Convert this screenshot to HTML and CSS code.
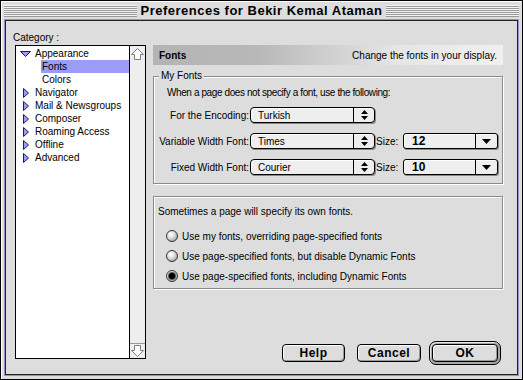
FILE: index.html
```html
<!DOCTYPE html>
<html lang="en">
<head>
    <meta charset="UTF-8">
    <title>Preferences for Bekir Kemal Ataman</title>
    <link rel="stylesheet" href="styles.css">
</head>
<body>
<div class="window">
    <div class="titlebar">
        <div class="stripes"></div>
        <div class="title">Preferences for Bekir Kemal Ataman</div>
        <div class="stripes"></div>
    </div>
    <div class="frame">
        <div class="content">
            <div class="category-label">Category :</div>

            <div class="list">
                <ul class="tree">
                    <li class="node"><span class="toggle"><svg width="11" height="6" viewBox="0 0 11 6"><polygon points="0.5,0.5 10.5,0.5 5.5,5.5" fill="#9c9cf8" stroke="#1c1c5c"/></svg></span>Appearance</li>
                    <li class="leaf selected"><span>Fonts</span></li>
                    <li class="leaf"><span>Colors</span></li>
                    <li class="node"><span class="toggle"><svg width="6" height="10" viewBox="0 0 6 10"><polygon points="0.5,0.5 5.5,5 0.5,9.5" fill="#9c9cf8" stroke="#1c1c5c"/></svg></span>Navigator</li>
                    <li class="node"><span class="toggle"><svg width="6" height="10" viewBox="0 0 6 10"><polygon points="0.5,0.5 5.5,5 0.5,9.5" fill="#9c9cf8" stroke="#1c1c5c"/></svg></span>Mail &amp; Newsgroups</li>
                    <li class="node"><span class="toggle"><svg width="6" height="10" viewBox="0 0 6 10"><polygon points="0.5,0.5 5.5,5 0.5,9.5" fill="#9c9cf8" stroke="#1c1c5c"/></svg></span>Composer</li>
                    <li class="node"><span class="toggle"><svg width="6" height="10" viewBox="0 0 6 10"><polygon points="0.5,0.5 5.5,5 0.5,9.5" fill="#9c9cf8" stroke="#1c1c5c"/></svg></span>Roaming Access</li>
                    <li class="node"><span class="toggle"><svg width="6" height="10" viewBox="0 0 6 10"><polygon points="0.5,0.5 5.5,5 0.5,9.5" fill="#9c9cf8" stroke="#1c1c5c"/></svg></span>Offline</li>
                    <li class="node"><span class="toggle"><svg width="6" height="10" viewBox="0 0 6 10"><polygon points="0.5,0.5 5.5,5 0.5,9.5" fill="#9c9cf8" stroke="#1c1c5c"/></svg></span>Advanced</li>
                </ul>
                <div class="scrollbar">
                    <div class="sb-arrow"><svg width="13" height="12" viewBox="0 0 13 12"><path d="M6.5 0.5 L12.5 6.5 L9.5 6.5 L9.5 11.5 L3.5 11.5 L3.5 6.5 L0.5 6.5 Z" fill="#fff" stroke="#808080"/></svg></div>
                    <div class="sb-arrow down"><svg width="13" height="12" viewBox="0 0 13 12"><path d="M3.5 0.5 L9.5 0.5 L9.5 5.5 L12.5 5.5 L6.5 11.5 L0.5 5.5 L3.5 5.5 Z" fill="#fff" stroke="#808080"/></svg></div>
                </div>
            </div>

            <div class="panel">
                <div class="panel-header">
                    <span class="panel-title">Fonts</span>
                    <span>Change the fonts in your display.</span>
                </div>

                <fieldset class="group">
                    <legend>My Fonts</legend>
                    <p class="intro">When a page does not specify a font, use the following:</p>
                    <div class="font-grid">
                        <div class="field-label">For the Encoding:</div>
                        <div class="popup">
                            <span class="popup-text">Turkish</span>
                            <span class="popup-arrows"><svg width="7" height="10" viewBox="0 0 7 10"><polygon points="3.5,0 7,4 0,4"/><polygon points="0,6 7,6 3.5,10"/></svg></span>
                        </div>

                        <div class="field-label">Variable Width Font:</div>
                        <div class="popup">
                            <span class="popup-text">Times</span>
                            <span class="popup-arrows"><svg width="7" height="10" viewBox="0 0 7 10"><polygon points="3.5,0 7,4 0,4"/><polygon points="0,6 7,6 3.5,10"/></svg></span>
                        </div>
                        <div class="size-label">Size:</div>
                        <div class="combo">
                            <span class="combo-text">12</span>
                            <span class="combo-arrow"><svg width="9" height="5" viewBox="0 0 9 5"><polygon points="0,0 9,0 4.5,5"/></svg></span>
                        </div>

                        <div class="field-label">Fixed Width Font:</div>
                        <div class="popup">
                            <span class="popup-text">Courier</span>
                            <span class="popup-arrows"><svg width="7" height="10" viewBox="0 0 7 10"><polygon points="3.5,0 7,4 0,4"/><polygon points="0,6 7,6 3.5,10"/></svg></span>
                        </div>
                        <div class="size-label">Size:</div>
                        <div class="combo">
                            <span class="combo-text">10</span>
                            <span class="combo-arrow"><svg width="9" height="5" viewBox="0 0 9 5"><polygon points="0,0 9,0 4.5,5"/></svg></span>
                        </div>
                    </div>
                </fieldset>

                <div class="group page-fonts">
                    <p>Sometimes a page will specify its own fonts.</p>
                    <div class="radio-list">
                        <div class="radio-row"><span class="radio"></span>Use my fonts, overriding page-specified fonts</div>
                        <div class="radio-row"><span class="radio"></span>Use page-specified fonts, but disable Dynamic Fonts</div>
                        <div class="radio-row"><span class="radio checked"></span>Use page-specified fonts, including Dynamic Fonts</div>
                    </div>
                </div>

                <div class="buttons">
                    <button class="btn help">Help</button>
                    <button class="btn cancel">Cancel</button>
                    <span class="default-ring"><button class="btn ok">OK</button></span>
                </div>
            </div>
        </div>
    </div>
</div>
</body>
</html>
```
FILE: styles.css
```css
* {
    box-sizing: border-box;
}
body {
    margin: 0;
    font-family: "Liberation Sans", Arial, sans-serif;
    font-size: 10px;
    color: #000;
    background: #dddddd;
}
.window {
    width: 523px;
    height: 380px;
    border: 1px solid #000;
    background: #dddddd;
    display: flex;
    flex-direction: column;
    box-shadow: inset 1px 1px 0 #fff;
}
.titlebar {
    height: 19px;
    display: flex;
    align-items: center;
    gap: 4px;
    padding: 0 3px;
}
.stripes {
    flex: 1;
    height: 12px;
    background: repeating-linear-gradient(to bottom, #f4f4f4 0 1px, #999 1px 2px);
}
.title {
    font-weight: bold;
    font-size: 13px;
    letter-spacing: 0.5px;
}
.frame {
    flex: 1;
    display: flex;
    padding: 0 4px 4px;
}
.content {
    flex: 1;
    border: 1px solid #222;
    box-shadow: 0 0 0 1px #9494cc;
    display: grid;
    grid-template-columns: 133px 350px;
    grid-template-rows: 14px 1fr;
    column-gap: 7px;
    padding: 10px 14px 9px 7px;
}
.category-label {
    line-height: 14px;
}

/* category list */
.list {
    grid-row: 2;
    margin-left: 2px;
    width: 131px;
    height: 314px;
    border: 1px solid #000;
    background: #fff;
    display: flex;
}
.tree {
    flex: 1;
    list-style: none;
    margin: 0;
    padding: 1px 0 0;
}
.tree li {
    height: 13px;
    line-height: 13px;
    display: flex;
    align-items: center;
    padding-left: 3px;
    white-space: nowrap;
}
.toggle {
    width: 13px;
    margin-right: 3px;
    display: flex;
    justify-content: center;
}
.tree li.leaf {
    padding-left: 25px;
}
.leaf span {
    flex: 1;
    padding-left: 1px;
}
.leaf.selected span {
    background: #9c9cf8;
}
.scrollbar {
    width: 16px;
    border-left: 1px solid #000;
    background: #eeeeee;
    display: flex;
    flex-direction: column;
    justify-content: space-between;
}
.sb-arrow {
    height: 15px;
    display: flex;
    align-items: center;
    justify-content: center;
}
.sb-arrow.down {
    border-top: 1px solid #999;
}

/* right panel */
.panel {
    grid-row: 2;
    grid-column: 2;
    display: flex;
    flex-direction: column;
}
.panel-header {
    height: 20px;
    display: flex;
    align-items: center;
    justify-content: space-between;
    padding: 0 6px;
    background: linear-gradient(to right, #b4b4b4 0%, #b8b8b8 30%, #e6e6e6 70%, #f0f0f0 100%);
}
.panel-title {
    font-weight: bold;
}
.group {
    border: 1px solid #8a8a8a;
    box-shadow: inset 1px 1px 0 #fff, 1px 1px 0 #fff;
}
fieldset.group {
    margin: 5px 0 0;
    padding: 5px 0 8px;
    min-width: 0;
}
legend {
    margin-left: 5px;
    padding: 0 2px;
    line-height: 12px;
    background: #dddddd;
}
.intro {
    margin: 0 0 8px 13px;
    line-height: 12px;
    letter-spacing: -0.4px;
}
.font-grid {
    display: grid;
    grid-template-columns: 95px 125px 26px 95px;
    column-gap: 1px;
    row-gap: 10px;
    align-items: center;
}
.field-label {
    grid-column: 1;
    text-align: right;
    white-space: nowrap;
}
.popup, .combo {
    height: 16px;
    border: 1px solid #000;
    border-radius: 4px;
    background: #eeeeee;
    box-shadow: inset 1px 1px 0 #fff, 1px 1px 0 #888;
    display: flex;
    align-items: center;
}
.popup-text {
    flex: 1;
    padding-left: 7px;
}
.popup-arrows {
    width: 21px;
    align-self: stretch;
    border-left: 1px solid #000;
    display: flex;
    align-items: center;
    justify-content: center;
}
.combo {
    border-radius: 3px;
}
.combo-text {
    flex: 1;
    padding-left: 8px;
    font-weight: bold;
    font-size: 12px;
}
.combo-arrow {
    width: 22px;
    align-self: stretch;
    border-left: 1px solid #000;
    display: flex;
    align-items: center;
    justify-content: center;
}
.page-fonts {
    margin-top: 12px;
    padding: 9px 0 5px 4px;
}
.page-fonts p {
    margin: 0 0 11px;
    line-height: 12px;
}
.radio-list {
    display: flex;
    flex-direction: column;
    gap: 6px;
    padding-left: 8px;
}
.radio-row {
    height: 14px;
    display: flex;
    align-items: center;
    gap: 4px;
}
.radio {
    width: 12px;
    height: 12px;
    border-radius: 50%;
    border: 1px solid #333;
    background: radial-gradient(circle at 38% 35%, #fff 0, #e4e4e4 35%, #8a8a8a 100%);
    display: flex;
    align-items: center;
    justify-content: center;
}
.radio.checked::after {
    content: "";
    width: 6px;
    height: 6px;
    border-radius: 50%;
    background: #000;
    box-shadow: 0 0 0 1px #555;
}

/* buttons */
.buttons {
    margin-top: auto;
    display: flex;
    align-items: center;
    justify-content: flex-end;
    padding-right: 2px;
}
.btn {
    height: 18px;
    padding: 0;
    border: 1px solid #000;
    border-radius: 4px;
    background: #dddddd;
    box-shadow: inset 1px 1px 0 #fff, inset -1px -1px 0 #999;
    font-family: "Liberation Sans", Arial, sans-serif;
    font-weight: bold;
    font-size: 12px;
    letter-spacing: 0.5px;
    color: #000;
}
.help {
    width: 63px;
    margin-right: 12px;
}
.cancel {
    width: 64px;
    margin-right: 8px;
}
.ok {
    width: 66px;
    display: block;
}
.default-ring {
    display: block;
    border: 1px solid #000;
    border-radius: 7px;
    padding: 2px;
    background: #a8a8a8;
    box-shadow: inset 1px 1px 0 #e8e8e8;
}
```
